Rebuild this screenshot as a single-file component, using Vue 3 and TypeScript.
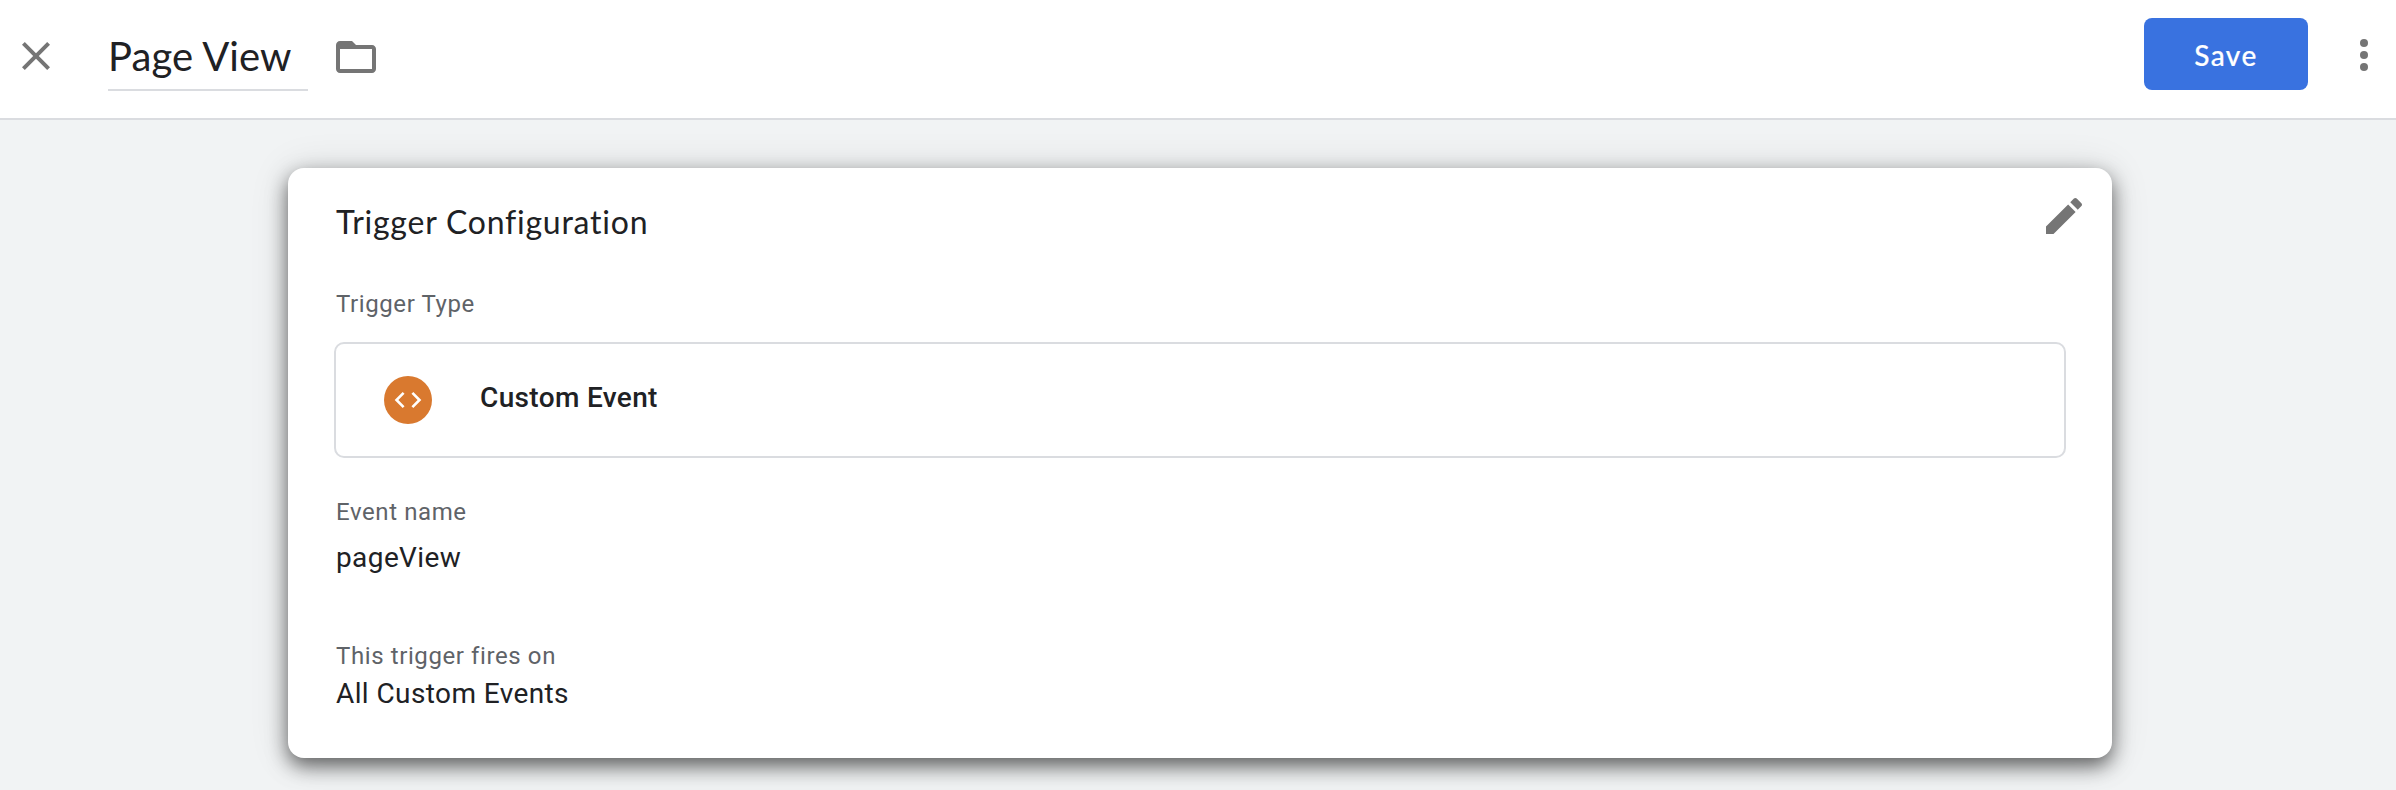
<script setup lang="ts">
import { ref } from 'vue'

interface Trigger {
  name: string
  type: string
  eventName: string
  firesOn: string
}

const trigger = ref<Trigger>({
  name: 'Page View',
  type: 'Custom Event',
  eventName: 'pageView',
  firesOn: 'All Custom Events',
})
</script>

<template>
  <div class="page">
    <header class="toolbar">
      <svg class="icon close" viewBox="0 0 24 24"><path d="M19 6.41L17.59 5 12 10.59 6.41 5 5 6.41 10.59 12 5 17.59 6.41 19 12 13.41 17.59 19 19 17.59 13.41 12z" /></svg>
      <div class="name"><span>{{ trigger.name }}</span></div>
      <svg class="icon folder" viewBox="0 0 24 24"><path d="M20 6h-8l-2-2H4c-1.1 0-1.99.9-1.99 2L2 18c0 1.1.9 2 2 2h16c1.1 0 2-.9 2-2V8c0-1.1-.9-2-2-2zm0 12H4V8h16v10z" /></svg>
      <button class="save" type="button">Save</button>
      <svg class="icon more" viewBox="0 0 24 24"><circle cx="12" cy="6" r="2" /><circle cx="12" cy="12" r="2" /><circle cx="12" cy="18" r="2" /></svg>
    </header>

    <main class="card">
      <div class="card-head">
        <h2>Trigger Configuration</h2>
        <svg class="icon edit" viewBox="0 0 24 24"><path d="M3 17.25V21h3.75L17.81 9.94l-3.75-3.75L3 17.25zM20.71 7.04c.39-.39.39-1.02 0-1.41l-2.34-2.34c-.39-.39-1.02-.39-1.41 0l-1.83 1.83 3.75 3.75 1.83-1.83z" /></svg>
      </div>
      <div class="label type-label">Trigger Type</div>
      <div class="type-box">
        <span class="badge">
          <svg viewBox="0 0 24 24"><path d="M9.4 16.6L4.8 12l4.6-4.6L8 6l-6 6 6 6 1.4-1.4zm5.2 0l4.6-4.6-4.6-4.6L16 6l6 6-6 6-1.4-1.4z" /></svg>
        </span>
        <span class="type-name">{{ trigger.type }}</span>
      </div>
      <div class="label event-label">Event name</div>
      <div class="value event-value">{{ trigger.eventName }}</div>
      <div class="label fires-label">This trigger fires on</div>
      <div class="value fires-value">{{ trigger.firesOn }}</div>
    </main>
  </div>
</template>

<style>
body {
  margin: 0;
  overflow: hidden;
}
</style>

<style scoped>
.page {
  box-sizing: border-box;
  height: 790px;
  background: #f1f3f4;
  color: #202124;
  font-family: Roboto, "Liberation Sans", sans-serif;
  overflow: hidden;
}
.icon {
  display: block;
  flex: none;
  width: 48px;
  height: 48px;
  fill: #757575;
}
.toolbar {
  box-sizing: border-box;
  display: flex;
  align-items: flex-start;
  height: 120px;
  padding: 0 8px 0 12px;
  background: #fff;
  border-bottom: 2px solid #dadce0;
}
.close {
  margin-top: 32px;
}
.name {
  box-sizing: border-box;
  width: 200px;
  height: 91px;
  margin-left: 48px;
  padding-top: 32px;
  border-bottom: 2px solid #dadce0;
  font-family: Lato, sans-serif;
  font-size: 40px;
  line-height: 48px;
  letter-spacing: 0.1px;
  white-space: nowrap;
}
.folder {
  margin: 33px 0 0 24px;
}
.save {
  width: 164px;
  height: 72px;
  margin: 18px 32px 0 auto;
  padding: 1px 0 0;
  border: 0;
  border-radius: 8px;
  background: #3972e0;
  color: #fff;
  font-family: Lato, sans-serif;
  font-size: 28px;
  font-weight: 500;
  letter-spacing: 1.5px;
  -webkit-text-stroke: 0.2px #fff;
}
.more {
  margin-top: 31px;
}
.card {
  box-sizing: border-box;
  width: 1824px;
  height: 590px;
  margin: 48px 0 0 288px;
  padding: 24px 46px 0;
  border-radius: 16px;
  background: #fff;
  box-shadow: 0 8px 20px rgba(0, 0, 0, 0.58), 0 2px 40px rgba(0, 0, 0, 0.12);
}
.card-head {
  display: flex;
  justify-content: space-between;
  height: 48px;
  margin-right: -22px;
  padding-left: 2px;
}
h2 {
  margin: 10px 0 0;
  font-family: Lato, sans-serif;
  font-size: 32px;
  font-weight: 400;
  line-height: 40px;
  letter-spacing: 0.77px;
}
.label,
.value {
  padding-left: 2px;
  white-space: nowrap;
}
.label {
  color: #5f6368;
  font-size: 24px;
  line-height: 32px;
  letter-spacing: 0.6px;
}
.value {
  font-size: 28px;
  line-height: 40px;
  letter-spacing: 0.4px;
}
.type-label {
  margin-top: 48px;
}
.type-box {
  box-sizing: border-box;
  display: flex;
  align-items: center;
  height: 116px;
  margin-top: 22px;
  padding-left: 48px;
  border: 2px solid #dadce0;
  border-radius: 10px;
}
.badge {
  display: flex;
  align-items: center;
  justify-content: center;
  width: 48px;
  height: 48px;
  border-radius: 50%;
  background: #d9792f;
}
.badge svg {
  width: 32px;
  height: 32px;
  fill: #fff;
}
.type-name {
  margin: 0 0 5px 48px;
  font-size: 28px;
  font-weight: 500;
  line-height: 40px;
  letter-spacing: 0.35px;
}
.event-label {
  margin-top: 38px;
}
.event-value {
  margin-top: 10px;
}
.fires-label {
  margin-top: 62px;
}
.fires-value {
  margin-top: 2px;
}
</style>
